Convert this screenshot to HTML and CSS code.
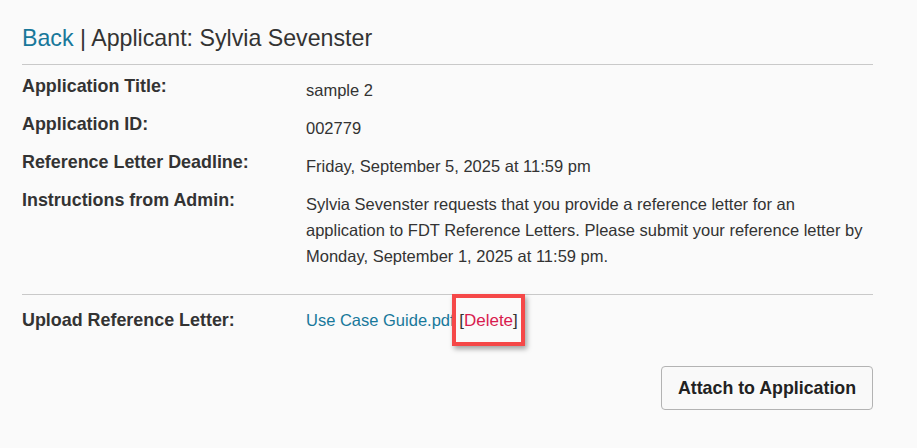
FILE: index.html
```html
<!DOCTYPE html>
<html lang="en">
<head>
<meta charset="utf-8">
<title>Applicant: Sylvia Sevenster</title>
<link rel="stylesheet" href="styles.css">
</head>
<body>
<div class="page">
  <h1 class="title"><a class="link" href="#">Back</a> | Applicant: Sylvia Sevenster</h1>
  <hr class="rule rule-top">
  <div class="details">
    <div class="row">
      <div class="label">Application Title:</div>
      <div class="value">sample 2</div>
    </div>
    <div class="row">
      <div class="label">Application ID:</div>
      <div class="value">002779</div>
    </div>
    <div class="row">
      <div class="label">Reference Letter Deadline:</div>
      <div class="value">Friday, September 5, 2025 at 11:59 pm</div>
    </div>
    <div class="row">
      <div class="label">Instructions from Admin:</div>
      <div class="value value-wrap">Sylvia Sevenster requests that you provide a reference letter for an application to FDT Reference Letters. Please submit your reference letter by Monday, September 1, 2025 at 11:59 pm.</div>
    </div>
  </div>
  <hr class="rule rule-mid">
  <div class="row upload-row">
    <div class="label">Upload Reference Letter:</div>
    <div class="value value-flat"><a class="link" href="#">Use Case Guide.pdf</a> <span class="delete-wrap">[<a class="delete" href="#">Delete</a>]</span></div>
  </div>
  <div class="actions">
    <button class="btn" type="button">Attach to Application</button>
  </div>
</div>
</body>
</html>
```

FILE: styles.css
```css
html, body {
  margin: 0;
  padding: 0;
  background: #fafafa;
}

body {
  font-family: "Liberation Sans", Arial, sans-serif;
  color: #333333;
}

.page {
  width: 851px;
  padding: 23px 0 0 22px;
}

.title {
  margin: 0;
  font-size: 23.2px;
  font-weight: normal;
  line-height: 30px;
  color: #333333;
}

.link {
  color: #18789a;
  text-decoration: none;
}

.rule {
  border: 0;
  height: 1px;
  background: #c9c9c9;
  margin: 0;
}

.rule-top {
  margin-top: 11px;
  margin-bottom: 9px;
}

.row {
  display: flex;
  align-items: flex-start;
  margin-bottom: 9px;
}

.label {
  width: 284px;
  flex: none;
  font-weight: bold;
  font-size: 17.9px;
  line-height: 24px;
  color: #333333;
}

.value {
  flex: 1;
  font-size: 16.5px;
  line-height: 26px;
  padding-top: 3px;
  color: #333333;
}

.value-wrap {
  padding-right: 4px;
}

.rule-mid {
  margin-top: 25px;
}

.upload-row {
  margin-top: 13px;
  margin-bottom: 0;
}

.value-flat {
  padding-top: 0;
  line-height: 24px;
}

.delete-wrap {
  position: relative;
  color: #333333;
  font-size: 17px;
}

.delete-wrap::after {
  content: "";
  position: absolute;
  left: -7px;
  right: -7px;
  top: -17px;
  bottom: -16px;
  border: 4px solid #f54848;
  box-shadow: 2px 3px 5px rgba(0, 0, 0, 0.35);
  pointer-events: none;
}

.delete {
  color: #d81b4f;
  text-decoration: none;
}

.actions {
  display: flex;
  justify-content: flex-end;
  margin-top: 33px;
}

.btn {
  width: 212px;
  height: 44px;
  border: 1px solid #b3b3b3;
  border-radius: 4px;
  background: #f9f9f9;
  font-family: "Liberation Sans", Arial, sans-serif;
  font-weight: bold;
  font-size: 17.8px;
  color: #222222;
  padding: 0;
}
```
